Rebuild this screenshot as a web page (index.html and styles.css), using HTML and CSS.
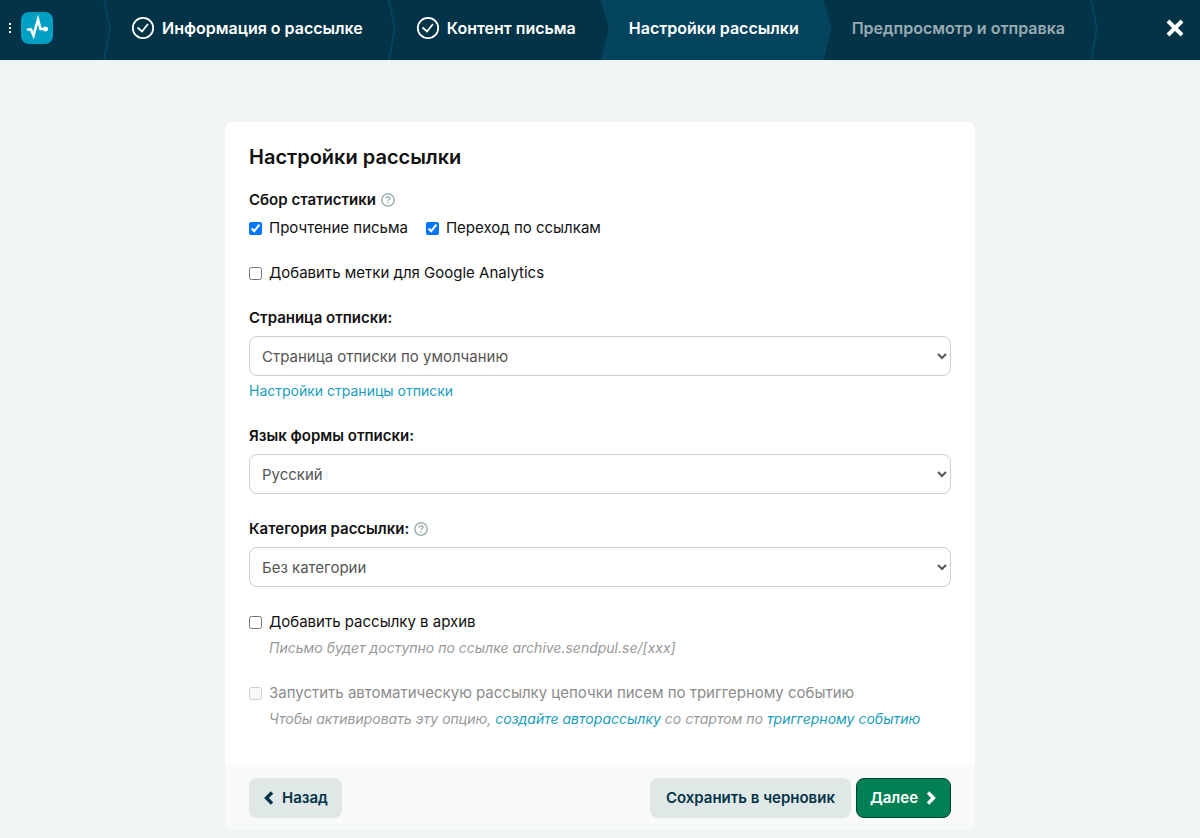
FILE: index.html
```html
<!DOCTYPE html>
<html lang="ru">
<head>
    <meta charset="UTF-8">
    <meta name="viewport" content="width=device-width, initial-scale=1.0">
    <title>Настройки рассылки</title>
    <link rel="stylesheet" href="styles.css">
</head>
<body>
    <header class="topbar">
        <div class="brand">
            <button class="menu-btn" type="button" aria-label="Меню">
                <svg width="4" height="12" viewBox="0 0 4 12" fill="#fff"><path d="M1 1h2v2H1zM1 5h2v2H1zM1 9h2v2H1z"/></svg>
            </button>
            <a class="logo" href="#" aria-label="Главная">
                <svg width="32" height="32" viewBox="0 0 32 32">
                    <path d="M7 17.500h3l2.500 6L17 7.500l2.500 9.500H25" fill="none" stroke="#fff" stroke-width="2.600" stroke-linecap="round" stroke-linejoin="miter"/>
                    <circle cx="24.500" cy="17" r="2.500" fill="#fff"/>
                </svg>
            </a>
        </div>
        <nav class="steps">
            <a class="step done" href="#">
                <svg width="24" height="24" viewBox="0 0 24 24" fill="none" stroke="#fff"><circle cx="12" cy="12" r="10.200" stroke-width="1.800"/><path d="M6.500 11.500l4.500 4 6-7.500" stroke-width="1.800"/></svg>
                Информация о рассылке
            </a>
            <a class="step done before-active" href="#">
                <svg width="24" height="24" viewBox="0 0 24 24" fill="none" stroke="#fff"><circle cx="12" cy="12" r="10.200" stroke-width="1.800"/><path d="M6.500 11.500l4.500 4 6-7.500" stroke-width="1.800"/></svg>
                Контент письма
            </a>
            <a class="step active" href="#">Настройки рассылки</a>
            <a class="step next" href="#">Предпросмотр и отправка</a>
        </nav>
        <button class="close-btn" type="button" aria-label="Закрыть">
            <svg width="20" height="20" viewBox="0 0 20 20"><path d="M3 3l14 14M17 3L3 17" stroke="#fff" stroke-width="4"/></svg>
        </button>
    </header>

    <main>
        <form class="card">
            <div class="card-body">
                <h1>Настройки рассылки</h1>

                <div class="group">
                    <div class="group-title">Сбор статистики
                        <svg class="help" width="14" height="14" viewBox="0 0 14 14" fill="none" stroke="#a3b5b5"><circle cx="7" cy="7" r="6.200" stroke-width="1.500"/><path d="M5 5.600c0-2.600 4-2.400 4-.2 0 1.400-2 1.400-2 2.800M7 9.200v1.500" stroke-width="1.400"/></svg>
                    </div>
                    <div class="checks">
                        <label class="check"><input type="checkbox" checked> Прочтение письма</label>
                        <label class="check"><input type="checkbox" checked> Переход по ссылкам</label>
                    </div>
                </div>

                <label class="check"><input type="checkbox"> Добавить метки для Google Analytics</label>

                <div class="group">
                    <label class="group-title" for="unsubscribe-page">Страница отписки:</label>
                    <select id="unsubscribe-page">
                        <option>Страница отписки по умолчанию</option>
                    </select>
                    <a class="sub-link" href="#">Настройки страницы отписки</a>
                </div>

                <div class="group">
                    <label class="group-title" for="form-lang">Язык формы отписки:</label>
                    <select id="form-lang">
                        <option>Русский</option>
                    </select>
                </div>

                <div class="group">
                    <label class="group-title" for="category">Категория рассылки:
                        <svg class="help" width="14" height="14" viewBox="0 0 14 14" fill="none" stroke="#a3b5b5"><circle cx="7" cy="7" r="6.200" stroke-width="1.500"/><path d="M5 5.600c0-2.600 4-2.400 4-.2 0 1.400-2 1.400-2 2.800M7 9.200v1.500" stroke-width="1.400"/></svg>
                    </label>
                    <select id="category">
                        <option>Без категории</option>
                    </select>
                </div>

                <div>
                    <label class="check"><input type="checkbox"> Добавить рассылку в архив</label>
                    <p class="hint">Письмо будет доступно по ссылке archive.sendpul.se/[xxx]</p>
                </div>

                <div>
                    <label class="check disabled"><input type="checkbox" disabled> Запустить автоматическую рассылку цепочки писем по триггерному событию</label>
                    <p class="hint">Чтобы активировать эту опцию, <a href="#">создайте авторассылку</a> со стартом по <a href="#">триггерному событию</a></p>
                </div>
            </div>

            <div class="card-footer">
                <button class="btn" type="button">
                    <svg width="11" height="14" viewBox="0 0 11 14"><path d="M9 1.500L3.500 7 9 12.500" fill="none" stroke="currentColor" stroke-width="3.400"/></svg>
                    Назад
                </button>
                <button class="btn save" type="button">Сохранить в черновик</button>
                <button class="btn primary" type="submit">
                    Далее
                    <svg width="11" height="14" viewBox="0 0 11 14"><path d="M2 1.500L7.500 7 2 12.500" fill="none" stroke="currentColor" stroke-width="3.400"/></svg>
                </button>
            </div>
        </form>
    </main>
</body>
</html>
```
FILE: styles.css
```css
* {
    margin: 0;
    padding: 0;
    box-sizing: border-box;
}
body {
    background: #f0f4f5;
    color: #111;
    font: 15px/20px Inter, "Liberation Sans", sans-serif;
}
button,
select {
    font: inherit;
    cursor: pointer;
}
a {
    color: #1a9dba;
    text-decoration: none;
}

/* top bar */
.topbar {
    display: flex;
    height: 60px;
    background: #033347;
}
.brand {
    position: relative;
    display: flex;
    align-items: center;
    flex: none;
    width: 103px;
    padding: 0 0 4px 8px;
    gap: 9px;
}
.menu-btn,
.close-btn {
    display: flex;
    background: none;
    border: none;
}
.logo {
    width: 32px;
    height: 32px;
    background: #00a0c4;
    border-radius: 8px;
}
.steps {
    display: flex;
}
.step {
    position: relative;
    display: flex;
    align-items: center;
    gap: 7px;
    padding: 0 25px 5px 28px;
    color: #fff;
    font-size: 16px;
    font-weight: 600;
    white-space: nowrap;
}
.step.active {
    background: #04445d;
}
.step.next {
    color: #9aabb3;
}
/* arrow on the right edge */
.brand::after,
.step::after {
    content: "";
    position: absolute;
    z-index: 1;
    top: 0;
    left: 100%;
    width: 8px;
    height: 60px;
    background: #04445d;
    clip-path: polygon(0 0, 2px 0, 8px 28px, 2px 100%, 0 100%, 6px 28px);
}
.step.before-active::after,
.step.active::after {
    clip-path: polygon(0 0, 8px 28px, 0 100%);
}
.step.before-active::after {
    background: #033347;
}
.close-btn {
    align-items: center;
    margin-left: auto;
    padding: 0 15px 4px;
}

/* settings card */
main {
    padding: 62px 20px 8px;
}
.card {
    max-width: 750px;
    margin: 0 auto;
    background: #fff;
    border-radius: 8px;
    overflow: hidden;
}
.card-body {
    display: flex;
    flex-direction: column;
    gap: 25px;
    padding: 20px 24px 36px;
}
h1 {
    margin-bottom: -7px;
    font-size: 20px;
    line-height: 30px;
    font-weight: 600;
}
.group {
    display: flex;
    flex-direction: column;
    align-items: flex-start;
}
.group-title {
    display: flex;
    align-items: center;
    gap: 5px;
    margin-bottom: 8px;
    font-weight: 600;
}
.checks {
    display: flex;
    gap: 18px;
}
.check {
    display: flex;
    align-items: center;
    gap: 7px;
}
.check input {
    width: 13px;
    height: 13px;
}
.check.disabled {
    color: #8c8c8c;
}
select {
    width: 100%;
    height: 40px;
    padding: 0 8px;
    background: #fff;
    border: 1px solid #c8d1d1;
    border-radius: 8px;
    color: #555;
}
.sub-link {
    margin-top: 5px;
    font-size: 14px;
}
.hint {
    margin: 6px 0 0 20px;
    color: #999;
    font-size: 14px;
    font-style: italic;
}
.card-footer {
    display: flex;
    gap: 5px;
    padding: 13px 24px 12px;
    background: #f8faf9;
}
.btn {
    display: flex;
    align-items: center;
    gap: 8px;
    height: 40px;
    padding: 0 14px;
    background: #e0e8e7;
    border: none;
    border-radius: 8px;
    color: #033347;
    font-weight: 600;
}
.btn.save {
    margin-left: auto;
    padding: 0 16px;
}
.btn.primary {
    padding: 0 13px;
    background: #008053;
    border: 1px solid #02412b;
    color: #fff;
}
```
